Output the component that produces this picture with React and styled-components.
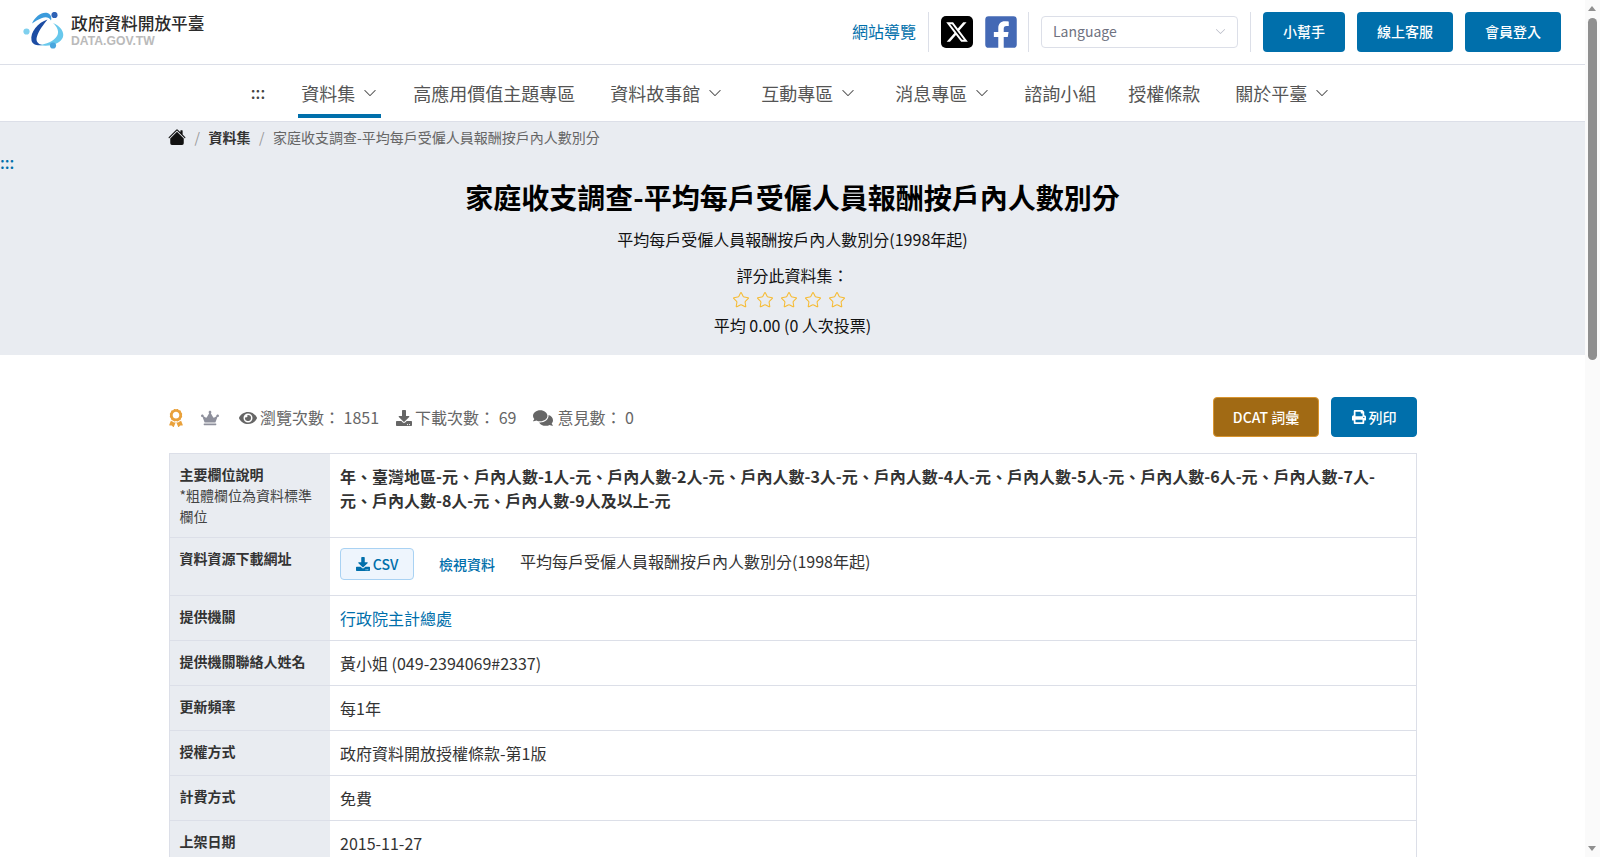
import React from "react";
import styled, { createGlobalStyle } from "styled-components";
import { FaEye, FaDownload, FaComments, FaCrown, FaAward, FaPrint, FaFacebookSquare } from "react-icons/fa";
import { FaXTwitter } from "react-icons/fa6";
import { BsChevronDown, BsHouseFill } from "react-icons/bs";
import { Star } from "lucide-react";

const Global = createGlobalStyle`
  html, body { margin: 0; padding: 0; background: #fff; }
  body { font-family: "Noto Sans CJK TC", "Noto Sans", sans-serif; font-size: 16px; line-height: 1.6; color: #212529; }
  * { box-sizing: border-box; }
  a { text-decoration: none; color: #006fab; }
`;

const Page = styled.div`
  padding-right: 15px;
`;

const ScrollTrack = styled.div`
  position: fixed;
  top: 0;
  right: 0;
  bottom: 0;
  width: 15px;
  background: #fafafa;
`;

const ScrollThumb = styled.div`
  position: absolute;
  top: 18px;
  left: 3px;
  width: 9px;
  height: 342px;
  border-radius: 5px;
  background: #8f8f8f;
`;

const ScrollArrow = styled.div`
  position: absolute;
  left: 3px;
  ${p => (p.$down ? "bottom: 6px;" : "top: 6px;")}
  width: 0;
  height: 0;
  border-left: 4.5px solid transparent;
  border-right: 4.5px solid transparent;
  ${p => (p.$down ? "border-top: 5px solid #8f8f8f;" : "border-bottom: 5px solid #8f8f8f;")}
`;

const TopBar = styled.header`
  height: 65px;
  display: flex;
  align-items: center;
  justify-content: space-between;
  padding: 0 24px 1px 23px;
  border-bottom: 1px solid #dcdfe8;
`;

const Logo = styled.a`
  display: flex;
  align-items: flex-start;
  gap: 6px;
  height: 40px;
`;

const LogoText = styled.div`
  display: flex;
  flex-direction: column;
  padding-top: 1px;
`;

const LogoTitle = styled.span`
  font-size: 16.7px;
  line-height: 20px;
  font-weight: 500;
  color: #2b2b2b;
  white-space: nowrap;
`;

const LogoSub = styled.span`
  font-family: "Liberation Sans", Arial, sans-serif;
  font-size: 12.2px;
  line-height: 15px;
  padding-top: 1px;
  font-weight: 700;
  color: #bababa;
`;

const TopRight = styled.div`
  display: flex;
  align-items: center;
`;

const SiteMap = styled.a`
  font-size: 16px;
  margin-right: 12px;
`;

const Divider = styled.span`
  width: 1px;
  height: 40px;
  background: #dcdfe8;
`;

const XBadge = styled.a`
  width: 32px;
  height: 32px;
  margin: 0 12px;
  border-radius: 5px;
  background: #000;
  color: #fff;
  display: flex;
  align-items: center;
  justify-content: center;
  font-size: 24px;
`;

const FbBadge = styled.a`
  width: 32px;
  height: 36px;
  margin-right: 11px;
  color: #4469b5;
  display: flex;
  align-items: center;
  justify-content: center;
  font-size: 36px;
`;

const LangSelect = styled.div`
  width: 197px;
  height: 32px;
  margin: 0 12px;
  padding: 0 12px 0 11px;
  border: 1px solid #dcdfe8;
  border-radius: 4px;
  display: flex;
  align-items: center;
  justify-content: space-between;
  font-size: 14px;
  color: #6f7280;
  svg { color: #b5b8c4; font-size: 11px; margin-right: -1px; }
`;

const TopButton = styled.a`
  width: ${p => p.$w}px;
  height: 40px;
  margin-left: 12px;
  border-radius: 4px;
  background: #006fab;
  color: #fff;
  font-size: 14px;
  font-weight: 500;
  display: flex;
  align-items: center;
  justify-content: center;
`;

const Nav = styled.nav`
  height: 57px;
  display: flex;
  align-items: stretch;
  justify-content: center;
  border-bottom: 1px solid #dcdfe8;
  padding-left: 11px;
`;

const NavDots = styled.a`
  color: #444;
  font-size: 16px;
  font-weight: 500;
  display: flex;
  align-items: center;
  padding-right: 20px;
`;

const NavItem = styled.a`
  position: relative;
  display: flex;
  align-items: center;
  gap: 8px;
  padding: 0 ${p => p.$pr}px 0 16px;
  font-size: 18px;
  color: #555;
  white-space: nowrap;
  svg { font-size: 14px; }
  ${p => p.$active && `
    &::after {
      content: "";
      position: absolute;
      left: 13px;
      width: 83px;
      bottom: 3px;
      height: 4px;
      background: #006fab;
    }
  `}
`;

const Hero = styled.section`
  height: 233px;
  background: #e9ecf1;
  position: relative;
  text-align: center;
`;

const Crumbs = styled.ol`
  list-style: none;
  margin: 0;
  padding: 3px 0 0 168px;
  display: flex;
  align-items: center;
  font-size: 14px;
  line-height: 24px;
  color: #555;
  li + li::before {
    content: "/";
    color: #999;
    font-weight: 400;
    margin: 0 8.5px;
  }
`;

const Crumb = styled.li`
  display: flex;
  align-items: center;
  font-weight: ${p => (p.$bold ? 700 : 400)};
  color: ${p => (p.$bold ? "#333" : "#666")};
  a { color: inherit; display: flex; }
`;

const Dots = styled.a`
  position: absolute;
  left: 0;
  top: 28px;
  font-size: 16px;
  line-height: 24px;
  font-weight: 500;
`;

const Title = styled.h1`
  margin: 0;
  padding-top: 27px;
  font-size: 28px;
  line-height: 42px;
  font-weight: 700;
  color: #000;
`;

const Sub = styled.p`
  margin: 0;
  padding-top: 9px;
  font-size: 16px;
  line-height: 24px;
  color: #111;
`;

const RateLabel = styled.p`
  margin: 0;
  padding-top: 12px;
  font-size: 16px;
  line-height: 24px;
  color: #111;
`;

const Stars = styled.div`
  display: flex;
  justify-content: center;
  gap: 6px;
  height: 24px;
  padding: 2px 7px 0 0;
  align-items: center;
  color: #f6bb33;
`;

const Score = styled.p`
  margin: 0;
  padding-top: 2px;
  font-size: 16px;
  line-height: 24px;
  color: #111;
`;

const Container = styled.main`
  width: 1248px;
  margin-left: 169px;
`;

const StatBar = styled.div`
  padding: 42px 0 16px;
  display: flex;
  align-items: center;
  justify-content: space-between;
`;

const Stats = styled.div`
  display: flex;
  align-items: center;
  color: #666;
  font-size: 16px;
  padding-top: 1px;
`;

const Stat = styled.span`
  display: flex;
  align-items: center;
  gap: ${p => p.$gap}px;
  margin-right: 17px;
  white-space: nowrap;
  svg { flex: none; }
`;

const Badge = styled.span`
  display: flex;
  color: ${p => p.$c};
  margin-right: ${p => p.$mr}px;
  svg { width: ${p => p.$w}px; height: 18px; }
`;

const Actions = styled.div`
  display: flex;
  gap: 12px;
`;

const ActionButton = styled.a`
  height: 40px;
  width: ${p => p.$w}px;
  display: flex;
  align-items: center;
  justify-content: center;
  gap: 3px;
  border-radius: 4px;
  border: 1px solid ${p => p.$border};
  background: ${p => p.$bg};
  color: #fff;
  font-size: 14px;
  font-weight: 500;
`;

const Table = styled.div`
  border: 1px solid #dcdfe8;
  border-bottom: 0;
`;

const Row = styled.div`
  display: grid;
  grid-template-columns: 160px 1fr;
  border-bottom: 1px solid #dcdfe8;
  min-height: ${p => p.$h || 45}px;
`;

const Head = styled.div`
  background: #e9ecf1;
  padding: 9.5px;
  font-size: 14px;
  line-height: 21px;
  font-weight: 700;
  color: #333;
`;

const HeadNote = styled.span`
  display: block;
  font-weight: 400;
  color: #444;
`;

const Cell = styled.div`
  padding: 10px 10px 0;
  font-size: 16px;
  line-height: 25.6px;
  color: #333;
`;

const BoldCell = styled(Cell)`
  line-height: 24px;
  font-weight: 700;
`;

const ResourceCell = styled.div`
  padding: 10px;
  display: flex;
  align-items: flex-start;
  color: #333;
`;

const CsvButton = styled.a`
  width: 74px;
  height: 32px;
  display: flex;
  align-items: center;
  justify-content: center;
  gap: 3px;
  background: #eef5fd;
  border: 1px solid #a9d2f3;
  border-radius: 4px;
  font-size: 14px;
  font-weight: 500;
  margin-right: 25px;
`;

const ViewLink = styled.a`
  font-size: 14px;
  line-height: 32px;
  font-weight: 500;
  margin-right: 25px;
`;

const ResourceName = styled.span`
  font-size: 16px;
  line-height: 26px;
`;

const navItems = [
  { label: "資料集", chev: true, active: true, pr: 20 },
  { label: "高應用價值主題專區", pr: 19 },
  { label: "資料故事館", chev: true, pr: 23 },
  { label: "互動專區", chev: true, pr: 24 },
  { label: "消息專區", chev: true, pr: 19 },
  { label: "諮詢小組", pr: 16 },
  { label: "授權條款", pr: 19 },
  { label: "關於平臺", chev: true, pr: 16 },
];

const rows = [
  ["提供機關", <a href="#">行政院主計總處</a>],
  ["提供機關聯絡人姓名", "黃小姐 (049-2394069#2337)"],
  ["更新頻率", "每1年"],
  ["授權方式", "政府資料開放授權條款-第1版"],
  ["計費方式", "免費"],
  ["上架日期", "2015-11-27"],
];

function LogoMark() {
  return (
    <svg width="42" height="40" viewBox="23 13 42 40">
      <path d="M47.5 20.5C38 23.5 30 33 31.5 41.5C32.5 46 38 47 42.5 46C37.5 45 35.5 42 37 37.5C38.5 32 43.5 25.5 47.5 20.5Z" fill="#1c4ca3" />
      <path d="M32 24.5C35 17.5 42 12.5 47.5 14C50.5 15 52 18 51 21.5C49 18 45.5 17.5 42 19C38 20.5 35 22.5 32 24.5Z" fill="#3b9bdc" />
      <path d="M39 46C50 48.5 61 44.5 63 38C64.5 33 60.5 27 53 24C57.5 28 59.5 33 57 37C54 42 46 45.5 39 46Z" fill="#68c8ec" />
      <circle cx="54.5" cy="16" r="3.1" fill="#2f62b5" />
      <circle cx="26.5" cy="32.5" r="3.1" fill="#7fd0ee" />
      <circle cx="53" cy="46.5" r="3.1" fill="#4aa6de" />
    </svg>
  );
}

export default function App() {
  return (
    <Page>
      <Global />
      <TopBar>
        <Logo href="#">
          <LogoMark />
          <LogoText>
            <LogoTitle>政府資料開放平臺</LogoTitle>
            <LogoSub>DATA.GOV.TW</LogoSub>
          </LogoText>
        </Logo>
        <TopRight>
          <SiteMap href="#">網站導覽</SiteMap>
          <Divider />
          <XBadge href="#" aria-label="X"><FaXTwitter /></XBadge>
          <FbBadge href="#" aria-label="Facebook"><FaFacebookSquare /></FbBadge>
          <Divider />
          <LangSelect>Language<BsChevronDown /></LangSelect>
          <Divider />
          <TopButton href="#" $w={82}>小幫手</TopButton>
          <TopButton href="#" $w={96}>線上客服</TopButton>
          <TopButton href="#" $w={96}>會員登入</TopButton>
        </TopRight>
      </TopBar>
      <Nav>
        <NavDots href="#">:::</NavDots>
        {navItems.map(({ label, chev, active, pr }) => (
          <NavItem href="#" key={label} $pr={pr} $active={active}>
            {label}
            {chev && <BsChevronDown />}
          </NavItem>
        ))}
      </Nav>
      <Hero>
        <Crumbs>
          <Crumb><a href="#" aria-label="首頁"><BsHouseFill size={18} color="#111" /></a></Crumb>
          <Crumb $bold><a href="#">資料集</a></Crumb>
          <Crumb>家庭收支調查-平均每戶受僱人員報酬按戶內人數別分</Crumb>
        </Crumbs>
        <Dots href="#">:::</Dots>
        <Title>家庭收支調查-平均每戶受僱人員報酬按戶內人數別分</Title>
        <Sub>平均每戶受僱人員報酬按戶內人數別分(1998年起)</Sub>
        <RateLabel>評分此資料集：</RateLabel>
        <Stars>
          {[0, 1, 2, 3, 4].map(i => <Star key={i} size={18} strokeWidth={1.4} />)}
        </Stars>
        <Score>平均 0.00 (0 人次投票)</Score>
      </Hero>
      <Container>
        <StatBar>
          <Stats>
            <Badge $c="#e9a13b" $mr={18} $w={14}><FaAward /></Badge>
            <Badge $c="#8e909c" $mr={20} $w={18}><FaCrown /></Badge>
            <Stat $gap={3}><FaEye size={18} />瀏覽次數： 1851</Stat>
            <Stat $gap={3}><FaDownload size={16} />下載次數： 69</Stat>
            <Stat $gap={4}><FaComments size={20} />意見數： 0</Stat>
          </Stats>
          <Actions>
            <ActionButton href="#" $w={106} $bg="#a16a14" $border="#d9952f">DCAT 詞彙</ActionButton>
            <ActionButton href="#" $w={86} $bg="#006fab" $border="#006fab"><FaPrint size={14} />列印</ActionButton>
          </Actions>
        </StatBar>
        <Table>
          <Row $h={84}>
            <Head>主要欄位說明<HeadNote>*粗體欄位為資料標準欄位</HeadNote></Head>
            <BoldCell>年、臺灣地區-元、戶內人數-1人-元、戶內人數-2人-元、戶內人數-3人-元、戶內人數-4人-元、戶內人數-5人-元、戶內人數-6人-元、戶內人數-7人-元、戶內人數-8人-元、戶內人數-9人及以上-元</BoldCell>
          </Row>
          <Row $h={58}>
            <Head>資料資源下載網址</Head>
            <ResourceCell>
              <CsvButton href="#"><FaDownload size={14} />CSV</CsvButton>
              <ViewLink href="#">檢視資料</ViewLink>
              <ResourceName>平均每戶受僱人員報酬按戶內人數別分(1998年起)</ResourceName>
            </ResourceCell>
          </Row>
          {rows.map(([h, v]) => (
            <Row key={h}>
              <Head>{h}</Head>
              <Cell>{v}</Cell>
            </Row>
          ))}
        </Table>
      </Container>
      <ScrollTrack aria-hidden="true">
        <ScrollArrow />
        <ScrollThumb />
        <ScrollArrow $down />
      </ScrollTrack>
    </Page>
  );
}
